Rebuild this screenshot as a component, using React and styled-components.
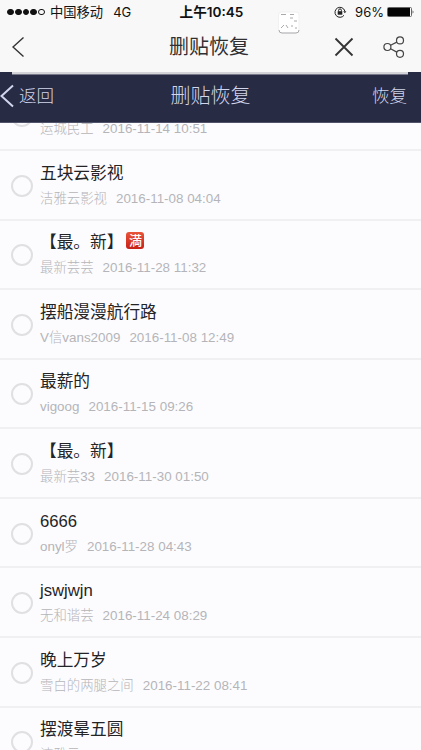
import React from 'react';
import styled, { createGlobalStyle } from 'styled-components';

const GlobalStyle = createGlobalStyle`
  * {
    box-sizing: border-box;
  }

  body {
    margin: 0;
    background: #fcfcfe;
    font-family: 'Liberation Sans', 'Noto Sans CJK SC', sans-serif;
  }
`;

const Screen = styled.div`
  display: flex;
  flex-direction: column;
  width: 421px;
  height: 750px;
  overflow: hidden;
  background: #fcfcfe;
`;

const StatusBar = styled.div`
  display: grid;
  grid-template-columns: 1fr auto 1fr;
  align-items: center;
  height: 24px;
  padding: 0 6px 0 7px;
  background: #f8f8f9;
  color: #111;
  font-family: Inter, 'Noto Sans CJK SC', sans-serif;
  font-size: 13px;
  line-height: 24px;
  white-space: nowrap;
`;

const Signal = styled.div`
  display: flex;
  gap: 1px;
  margin-right: 5px;
`;

const Dot = styled.i`
  width: 6.8px;
  height: 6.8px;
  border: 1px solid #111;
  border-radius: 50%;
  background: ${({ $on }) => ($on ? '#111' : 'transparent')};
`;

const StatusSide = styled.div`
  display: flex;
  align-items: center;
  justify-content: ${({ $end }) => ($end ? 'flex-end' : 'flex-start')};
  svg {
    flex: none;
  }
`;

const Carrier = styled.span`
  font-size: 13.3px;
`;

const Network = styled.span`
  margin-left: 10px;
`;

const Clock = styled.div`
  padding-left: 1px;
  font-size: 13.6px;
  font-weight: 600;
`;

const Percent = styled.span`
  margin: 0 3px 0 8px;
`;

const BrowserBar = styled.div`
  position: relative;
  display: grid;
  grid-template-columns: 1fr auto 1fr;
  align-items: center;
  height: 48px;
  padding: 0 16px 2px 12px;
  background: #f8f8f9;
  color: #303033;
  svg {
    display: block;
  }
`;

const Tools = styled.div`
  display: flex;
  align-items: center;
  justify-content: flex-end;
  gap: 29px;
`;

const Watermark = styled.svg`
  position: absolute;
  top: -14px;
  left: 277px;
`;

const Progress = styled.div`
  height: 3px;
  background: #272b44;
  div {
    width: 396px;
    height: 3px;
    margin-left: 12px;
    border-bottom: 1px solid #77798a;
    background: #d3d3d8;
  }
`;

const NavBar = styled.div`
  display: grid;
  grid-template-columns: 1fr auto 1fr;
  align-items: center;
  flex: none;
  height: 48px;
  padding: 0 14px 5px 13px;
  border-bottom: 1px solid #50536a;
  background: #272b44;
  color: #d2d6ec;
  font-size: 17.5px;
  font-weight: 300;
  line-height: 26px;
`;

const Title = styled.h1`
  margin: 0 0 0 1px;
  font-size: 20px;
  font-weight: ${({ $light }) => ($light ? 300 : 400)};
  line-height: 30px;
`;

const Back = styled.div`
  display: flex;
  align-items: center;
  gap: 5px;
  margin-left: -13px;
  svg {
    flex: none;
  }
`;

const Action = styled.div`
  text-align: right;
`;

const Viewport = styled.div`
  flex: 1;
  min-height: 0;
  overflow: hidden;
`;

const List = styled.div`
  margin-top: -41.7px;
`;

const Row = styled.div`
  display: flex;
  align-items: center;
  height: 69.6px;
  padding: 0 11px;
  border-bottom: 2px solid #f0f0f3;
`;

const Radio = styled.div`
  flex: none;
  width: 22px;
  height: 22px;
  margin: 2px 7px 0 0;
  border: 2px solid #e0e0e3;
  border-radius: 50%;
`;

const Entry = styled.div`
  padding-top: 1px;
`;

const Subject = styled.div`
  display: flex;
  align-items: center;
  height: 25px;
  color: #242427;
  font-size: 16.7px;
  line-height: 25px;
  white-space: nowrap;
`;

const Meta = styled.div`
  display: flex;
  gap: 9px;
  height: 24px;
  color: #b5b5b9;
  font-size: 13.4px;
  font-weight: 300;
  line-height: 25px;
  white-space: nowrap;
`;

const Emoji = styled.span`
  width: 18px;
  height: 17px;
  margin: -4px 0 0 3px;
  border-radius: 3px;
  background: linear-gradient(#e8553a, #c81f16);
  color: #fff;
  font-family: 'Noto Sans CJK JP', sans-serif;
  font-size: 13px;
  font-weight: 500;
  line-height: 16px;
  text-align: center;
`;

const posts = [
  { subject: '运城', author: '运城民工', time: '2016-11-14 10:51' },
  { subject: '五块云影视', author: '洁雅云影视', time: '2016-11-08 04:04' },
  { subject: '【最。新】', emoji: '満', author: '最新芸芸', time: '2016-11-28 11:32' },
  { subject: '摆船漫漫航行路', author: 'V信vans2009', time: '2016-11-08 12:49' },
  { subject: '最薪的', author: 'vigoog', time: '2016-11-15 09:26' },
  { subject: '【最。新】', author: '最新芸33', time: '2016-11-30 01:50' },
  { subject: '6666', author: 'onyl罗', time: '2016-11-28 04:43' },
  { subject: 'jswjwjn', author: '无和谐芸', time: '2016-11-24 08:29' },
  { subject: '晚上万岁', author: '雪白的两腿之间', time: '2016-11-22 08:41' },
  { subject: '摆渡晕五圆', author: '洁雅云', time: '' },
];

const LockIcon = () => (
  <svg width="13" height="12" viewBox="0 0 13 12" fill="none" stroke="#222">
    <path d="M10 9.3A5 5 0 1 1 10.8 5" />
    <path d="M9.2 5.2h3.2l-1.5 2z" fill="#222" stroke="none" />
    <path d="M4.6 5.5V4.3a1.4 1.4 0 0 1 2.8 0v1.2" />
    <rect x="3.7" y="5.2" width="4.6" height="3.5" fill="#222" stroke="none" />
  </svg>
);

const BatteryIcon = () => (
  <svg width="28" height="10" viewBox="0 0 28 10">
    <rect x="0.5" y="0.5" width="24" height="9" rx="1" fill="none" stroke="#666" />
    <rect x="1" y="1" width="22" height="8" fill="#050505" />
    <path d="M25.7 3.2q1.6 1.8 0 3.6z" fill="#222" />
  </svg>
);

const ShareIcon = () => (
  <svg width="22" height="22" viewBox="0 0 22 22" fill="none" stroke="#444" strokeWidth="1.2">
    <circle cx="4.4" cy="11" r="3.5" />
    <circle cx="17" cy="4.4" r="3.5" />
    <circle cx="17" cy="17.8" r="3.5" />
    <path d="M7.6 9.3l6.2-3.2M7.6 12.7l6.2 3.4" />
  </svg>
);

const App = () => (
  <Screen>
    <GlobalStyle />
    <StatusBar>
      <StatusSide>
        <Signal>
          <Dot $on />
          <Dot $on />
          <Dot $on />
          <Dot $on />
          <Dot />
        </Signal>
        <Carrier>中国移动</Carrier>
        <Network>4G</Network>
      </StatusSide>
      <Clock>上午10:45</Clock>
      <StatusSide $end>
        <LockIcon />
        <Percent>96%</Percent>
        <BatteryIcon />
      </StatusSide>
    </StatusBar>
    <BrowserBar>
      <svg width="14" height="22" viewBox="0 0 14 22" fill="none" stroke="#333" strokeWidth="1.4">
        <path d="M11.5 1.5L1 11l10.5 9.5" />
      </svg>
      <Title>删贴恢复</Title>
      <Tools>
        <svg width="20" height="20" viewBox="0 0 20 20" stroke="#333" strokeWidth="1.8">
          <path d="M1.5 1.5l17 17M18.5 1.5l-17 17" />
        </svg>
        <ShareIcon />
      </Tools>
      <Watermark width="24" height="24" viewBox="0 0 24 24" fill="none" stroke="#aaaaac">
        <rect x="1.5" y="2" width="20.5" height="21" rx="3" fill="#fff" stroke="#f1f1f2" />
        <path d="M2 20q0 3 3 3h14q3 0 3-3" />
        <path d="M4 4.5h5M13 4.5h4M13 8h3M17 11h3M7 15l-3 3M9 15l2 3M14 16h2M18 18h2" />
      </Watermark>
    </BrowserBar>
    <Progress>
      <div />
    </Progress>
    <NavBar>
      <Back>
        <svg width="14" height="24" viewBox="0 0 14 24" fill="none" stroke="#d2d6ec" strokeWidth="2">
          <path d="M13 1.5L1.5 12L13 22.5" />
        </svg>
        <span>返回</span>
      </Back>
      <Title $light>删贴恢复</Title>
      <Action>恢复</Action>
    </NavBar>
    <Viewport>
      <List>
        {posts.map(({ subject, emoji, author, time }) => (
          <Row key={author}>
            <Radio />
            <Entry>
              <Subject>
                {subject}
                {emoji && <Emoji>{emoji}</Emoji>}
              </Subject>
              <Meta>
                <span>{author}</span>
                {time && <span>{time}</span>}
              </Meta>
            </Entry>
          </Row>
        ))}
      </List>
    </Viewport>
  </Screen>
);

export default App;
